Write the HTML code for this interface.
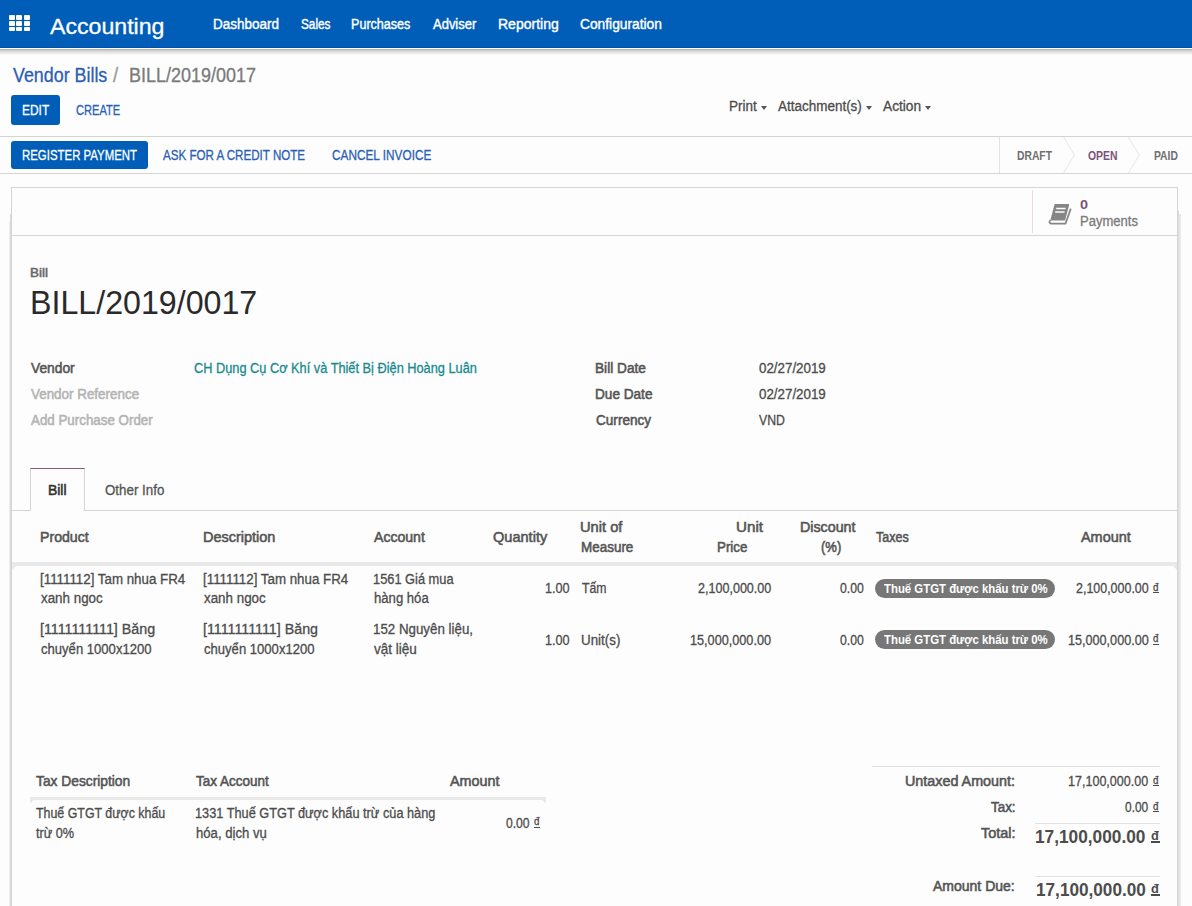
<!DOCTYPE html>
<html><head><meta charset="utf-8">
<style>
*{box-sizing:border-box;}
html,body{margin:0;padding:0;}
body{width:1192px;height:906px;overflow:hidden;position:relative;background:#fdfdfd;font-family:"Liberation Sans",sans-serif;color:#4c4c4c;}
.t{position:absolute;white-space:nowrap;line-height:normal;transform-origin:0 0;}
.n{-webkit-text-stroke:0.3px currentColor;}
.sb{-webkit-text-stroke:0.55px currentColor;}
.r{position:absolute;}
.grid i{position:absolute;width:6px;height:5px;background:#fff;border-radius:1px;}
.caret{position:absolute;width:0;height:0;border-left:3.5px solid transparent;border-right:3.5px solid transparent;border-top:4px solid #555;}
.band{position:absolute;height:3px;background:#e9e9e9;}
.badge{position:absolute;background:#777777;border-radius:10px;}
</style></head><body>
<!-- navbar -->
<div class="r" style="left:0;top:0;width:1192px;height:47px;background:#005eb8;"></div>
<div class="r" style="left:0;top:47px;width:1192px;height:1px;background:#0052aa;"></div>
<div class="r" style="left:0;top:48px;width:1192px;height:1px;background:#ffffff;"></div>
<div class="r" style="left:0;top:49px;width:1192px;height:1px;background:#b6b6b6;"></div>
<div class="r" style="left:0;top:50px;width:1192px;height:1px;background:#cfcfcf;"></div>
<div class="r" style="left:0;top:51px;width:1192px;height:1px;background:#d9d9d9;"></div>
<div class="r" style="left:0;top:52px;width:1192px;height:1px;background:#e4e4e4;"></div>
<div class="r" style="left:0;top:53px;width:1192px;height:1px;background:#ececec;"></div>
<div class="r" style="left:0;top:54px;width:1192px;height:1px;background:#f6f6f6;"></div>
<div class="r grid" style="left:0;top:0;width:40px;height:40px;">
<i style="left:9.1px;top:15px;width:6px;height:4.8px;"></i><i style="left:16.4px;top:15px;width:6px;height:4.8px;"></i><i style="left:23.8px;top:15px;width:6px;height:4.8px;"></i><i style="left:9.1px;top:21px;width:6px;height:4.6px;"></i><i style="left:16.4px;top:21px;width:6px;height:4.6px;"></i><i style="left:23.8px;top:21px;width:6px;height:4.6px;"></i><i style="left:9.1px;top:26.8px;width:6px;height:4.4px;"></i><i style="left:16.4px;top:26.8px;width:6px;height:4.4px;"></i><i style="left:23.8px;top:26.8px;width:6px;height:4.4px;"></i>
</div>
<!-- control panel -->
<div class="r" style="left:11px;top:95px;width:49px;height:30px;background:#005eb8;border-radius:3px;"></div>
<div class="caret" style="left:761px;top:105.5px;"></div>
<div class="caret" style="left:866px;top:105.5px;"></div>
<div class="caret" style="left:925px;top:105.5px;"></div>
<div class="r" style="left:0;top:136px;width:1192px;height:1px;background:#d4d4d4;"></div>
<div class="r" style="left:0;top:173px;width:1192px;height:1px;background:#d4d4d4;"></div>
<div class="r" style="left:11px;top:141px;width:137px;height:28px;background:#005eb8;border-radius:3px;"></div>
<div class="r" style="left:999px;top:137px;width:1px;height:36px;background:#e2e2e2;"></div>
<svg class="r" style="left:1060px;top:137px;" width="90" height="36" viewBox="0 0 90 36">
<path d="M3.6 0 L14.4 18 L3.6 36" fill="none" stroke="#e6e6e6" stroke-width="1"/>
<path d="M68.4 0 L79.3 18 L68.4 36" fill="none" stroke="#e6e6e6" stroke-width="1"/>
</svg>
<!-- sheet -->
<div class="r" style="left:10px;top:214px;width:1px;height:700px;background:#dcdcdc;"></div><div class="r" style="left:9px;top:222px;width:1px;height:700px;background:#ececec;"></div>
<div class="r" style="left:1178px;top:211px;width:1px;height:700px;background:#dedede;"></div><div class="r" style="left:1179px;top:214px;width:2px;height:700px;background:#e8e8e8;"></div>
<div class="r" style="left:11px;top:187px;width:1167px;height:740px;border:1px solid #d4d4d4;background:#fdfdfd;"></div>
<div class="r" style="left:12px;top:235px;width:1165px;height:1px;background:#d4d4d4;"></div>
<div class="r" style="left:1032px;top:190px;width:1px;height:43px;background:#eadcdc;"></div>
<svg class="r" style="left:1040px;top:195px;" width="40" height="35" viewBox="0 0 40 35">
<path d="M14.6 9 L28.2 9 Q29.4 9 29.1 10.2 L25 25.6 L10.3 25.6 Z" fill="#868686"/>
<path d="M10.6 25 Q8 27.5 11 28.6 L25.5 28.6 L30.8 13.6" fill="none" stroke="#868686" stroke-width="1.7" stroke-linejoin="round"/>
<path d="M16.2 13.4 L25.6 13.4 M15.2 17 L24.6 17" stroke="#fdfdfd" stroke-width="1.5"/>
</svg>
<!-- tabs -->
<div class="r" style="left:12px;top:510px;width:1165px;height:1px;background:#d4d4d4;"></div>
<div class="r" style="left:30px;top:468px;width:55px;height:43px;border:1px solid #d4d4d4;border-top:1px solid #875a7b;border-bottom:none;background:#fdfdfd;"></div>
<!-- table bands -->
<div class="band" style="left:12px;top:562px;width:1165px;height:4px;"></div>
<div class="r" style="left:12px;top:566px;width:4px;height:4px;background:linear-gradient(135deg,#e9e9e9 45%,transparent 55%);"></div>
<div class="r" style="left:1173px;top:566px;width:4px;height:4px;background:linear-gradient(225deg,#e9e9e9 45%,transparent 55%);"></div>
<div class="badge" style="left:875px;top:579px;width:180px;height:19px;"></div>
<div class="badge" style="left:875px;top:630px;width:180px;height:19px;"></div>
<div class="band" style="left:30px;top:797px;width:516px;"></div>
<div class="r" style="left:30px;top:800px;width:4px;height:3px;background:linear-gradient(135deg,#e9e9e9 45%,transparent 55%);"></div>
<div class="r" style="left:542px;top:800px;width:4px;height:3px;background:linear-gradient(225deg,#e9e9e9 45%,transparent 55%);"></div>
<!-- totals lines -->
<div class="r" style="left:872px;top:766px;width:288px;height:1px;background:#e2e2e2;"></div>
<div class="r" style="left:1035px;top:823px;width:125px;height:1px;background:#e2e2e2;"></div>
<div class="r" style="left:1035px;top:876px;width:125px;height:1px;background:#e2e2e2;"></div>
<div class="r" style="left:1153.2px;top:592px;width:5.6px;height:1.2px;background:#4c4c4c;"></div>
<div class="r" style="left:1153.2px;top:643.5px;width:5.6px;height:1.2px;background:#4c4c4c;"></div>
<div class="r" style="left:534.2px;top:826.5px;width:5.6px;height:1.2px;background:#4c4c4c;"></div>
<div class="r" style="left:1153.2px;top:784.8px;width:5.6px;height:1.2px;background:#4c4c4c;"></div>
<div class="r" style="left:1153.2px;top:810.8px;width:5.6px;height:1.2px;background:#4c4c4c;"></div>
<div class="r" style="left:1151.0px;top:841px;width:8.5px;height:1.5px;background:#4c4c4c;"></div>
<div class="r" style="left:1151.0px;top:894px;width:8.5px;height:1.5px;background:#4c4c4c;"></div>
<div class="t n" style="left:49.50px;top:13.5px;font-size:22.5px;font-weight:normal;color:#ffffff;transform:scaleX(1.0279);">Accounting</div>
<div class="t sb" style="left:212.64px;top:16px;font-size:14px;font-weight:normal;color:#ffffff;transform:scaleX(0.9625);-webkit-text-stroke:0.4px #fff;">Dashboard</div>
<div class="t sb" style="left:300.50px;top:16px;font-size:14px;font-weight:normal;color:#ffffff;transform:scaleX(0.8424);-webkit-text-stroke:0.4px #fff;">Sales</div>
<div class="t sb" style="left:351.10px;top:16px;font-size:14px;font-weight:normal;color:#ffffff;transform:scaleX(0.8980);-webkit-text-stroke:0.4px #fff;">Purchases</div>
<div class="t sb" style="left:433.10px;top:16px;font-size:14px;font-weight:normal;color:#ffffff;transform:scaleX(0.9273);-webkit-text-stroke:0.4px #fff;">Adviser</div>
<div class="t sb" style="left:498.00px;top:16px;font-size:14px;font-weight:normal;color:#ffffff;-webkit-text-stroke:0.4px #fff;">Reporting</div>
<div class="t sb" style="left:579.90px;top:16px;font-size:14px;font-weight:normal;color:#ffffff;transform:scaleX(0.9832);-webkit-text-stroke:0.4px #fff;">Configuration</div>
<div class="t n" style="left:12.60px;top:64px;font-size:20px;font-weight:normal;color:#2b5fb4;transform:scaleX(0.8929);">Vendor Bills</div>
<div class="t n" style="left:113.40px;top:64px;font-size:20px;font-weight:normal;color:#9a9a9a;transform:scaleX(0.9333);">/</div>
<div class="t n" style="left:128.90px;top:64px;font-size:20px;font-weight:normal;color:#7a7a7a;transform:scaleX(0.8992);">BILL/2019/0017</div>
<div class="t n" style="left:22.05px;top:102px;font-size:14px;font-weight:normal;color:#ffffff;transform:scaleX(0.8520);">EDIT</div>
<div class="t n" style="left:76.00px;top:102px;font-size:14px;font-weight:normal;color:#2b5fb4;transform:scaleX(0.7923);">CREATE</div>
<div class="t n" style="left:728.64px;top:98px;font-size:14px;font-weight:normal;color:#4c4c4c;transform:scaleX(0.9643);">Print</div>
<div class="t n" style="left:778.00px;top:98px;font-size:14px;font-weight:normal;color:#4c4c4c;transform:scaleX(0.9621);">Attachment(s)</div>
<div class="t n" style="left:883.30px;top:98px;font-size:14px;font-weight:normal;color:#4c4c4c;transform:scaleX(0.9784);">Action</div>
<div class="t n" style="left:22.08px;top:147px;font-size:14px;font-weight:normal;color:#ffffff;transform:scaleX(0.8157);">REGISTER PAYMENT</div>
<div class="t n" style="left:163.00px;top:147px;font-size:14px;font-weight:normal;color:#2b5fb4;transform:scaleX(0.8277);">ASK FOR A CREDIT NOTE</div>
<div class="t n" style="left:332.10px;top:147px;font-size:14px;font-weight:normal;color:#2b5fb4;transform:scaleX(0.8439);">CANCEL INVOICE</div>
<div class="t" style="left:1016.90px;top:149px;font-size:12px;font-weight:bold;color:#6f6f6f;transform:scaleX(0.8590);">DRAFT</div>
<div class="t" style="left:1088.10px;top:149px;font-size:12px;font-weight:bold;color:#7e5478;transform:scaleX(0.8698);">OPEN</div>
<div class="t" style="left:1153.80px;top:149px;font-size:12px;font-weight:bold;color:#6f6f6f;transform:scaleX(0.8608);">PAID</div>
<div class="t" style="left:1080.20px;top:197px;font-size:13px;font-weight:bold;color:#7e5478;transform:scaleX(1.1143);">0</div>
<div class="t n" style="left:1080.07px;top:213px;font-size:14px;font-weight:normal;color:#7a7a7a;transform:scaleX(0.9306);">Payments</div>
<div class="t sb" style="left:29.87px;top:265px;font-size:13px;font-weight:normal;color:#666666;transform:scaleX(1.0336);">Bill</div>
<div class="t n" style="left:30.05px;top:284px;font-size:33px;font-weight:normal;color:#2a2a2a;transform:scaleX(0.9752);-webkit-text-stroke:0;">BILL/2019/0017</div>
<div class="t sb" style="left:30.50px;top:360px;font-size:14px;font-weight:normal;color:#555555;transform:scaleX(0.9841);">Vendor</div>
<div class="t sb" style="left:30.50px;top:386px;font-size:14px;font-weight:normal;color:#b4b4b4;transform:scaleX(0.9578);">Vendor Reference</div>
<div class="t sb" style="left:30.50px;top:412px;font-size:14px;font-weight:normal;color:#b4b4b4;transform:scaleX(0.9534);">Add Purchase Order</div>
<div class="t n" style="left:193.80px;top:360px;font-size:14px;font-weight:normal;color:#1a8a8f;transform:scaleX(0.9123);">CH Dụng Cụ Cơ Khí và Thiết Bị Điện Hoàng Luân</div>
<div class="t sb" style="left:594.52px;top:360px;font-size:14px;font-weight:normal;color:#555555;transform:scaleX(0.9758);">Bill Date</div>
<div class="t sb" style="left:594.53px;top:386px;font-size:14px;font-weight:normal;color:#555555;transform:scaleX(0.9716);">Due Date</div>
<div class="t sb" style="left:595.50px;top:412px;font-size:14px;font-weight:normal;color:#555555;transform:scaleX(0.9702);">Currency</div>
<div class="t n" style="left:759.00px;top:360px;font-size:14px;font-weight:normal;color:#4c4c4c;transform:scaleX(0.9533);">02/27/2019</div>
<div class="t n" style="left:759.00px;top:386px;font-size:14px;font-weight:normal;color:#4c4c4c;transform:scaleX(0.9533);">02/27/2019</div>
<div class="t n" style="left:759.00px;top:412px;font-size:14px;font-weight:normal;color:#4c4c4c;transform:scaleX(0.8761);">VND</div>
<div class="t sb" style="left:47.71px;top:482px;font-size:14px;font-weight:normal;color:#333333;transform:scaleX(0.9910);">Bill</div>
<div class="t n" style="left:104.80px;top:482px;font-size:14px;font-weight:normal;color:#555555;transform:scaleX(0.9525);">Other Info</div>
<div class="t sb" style="left:40.49px;top:529px;font-size:14px;font-weight:normal;color:#555555;transform:scaleX(1.0093);">Product</div>
<div class="t sb" style="left:202.77px;top:529px;font-size:14px;font-weight:normal;color:#555555;transform:scaleX(1.0331);">Description</div>
<div class="t sb" style="left:373.80px;top:529px;font-size:14px;font-weight:normal;color:#555555;transform:scaleX(1.0040);">Account</div>
<div class="t sb" style="left:492.60px;top:529px;font-size:14px;font-weight:normal;color:#555555;transform:scaleX(1.0396);">Quantity</div>
<div class="t sb" style="left:580.45px;top:519px;font-size:14px;font-weight:normal;color:#555555;transform:scaleX(1.0487);">Unit of</div>
<div class="t sb" style="left:580.54px;top:539px;font-size:14px;font-weight:normal;color:#555555;transform:scaleX(0.9612);">Measure</div>
<div class="t sb" style="left:735.92px;top:519px;font-size:14px;font-weight:normal;color:#555555;transform:scaleX(1.0830);">Unit</div>
<div class="t sb" style="left:717.25px;top:539px;font-size:14px;font-weight:normal;color:#555555;transform:scaleX(0.9547);">Price</div>
<div class="t sb" style="left:800.48px;top:519px;font-size:14px;font-weight:normal;color:#555555;transform:scaleX(1.0191);">Discount</div>
<div class="t sb" style="left:820.90px;top:539px;font-size:14px;font-weight:normal;color:#555555;transform:scaleX(0.9285);">(%)</div>
<div class="t sb" style="left:875.80px;top:529px;font-size:14px;font-weight:normal;color:#555555;transform:scaleX(0.8941);">Taxes</div>
<div class="t sb" style="left:1080.90px;top:529px;font-size:14px;font-weight:normal;color:#555555;transform:scaleX(1.0298);">Amount</div>
<div class="t n" style="left:40.35px;top:570.5px;font-size:14px;font-weight:normal;color:#4c4c4c;transform:scaleX(0.9519);">[1111112] Tam nhua FR4</div>
<div class="t n" style="left:41.30px;top:590px;font-size:14px;font-weight:normal;color:#4c4c4c;transform:scaleX(0.9550);">xanh ngoc</div>
<div class="t n" style="left:202.75px;top:570.5px;font-size:14px;font-weight:normal;color:#4c4c4c;transform:scaleX(0.9519);">[1111112] Tam nhua FR4</div>
<div class="t n" style="left:203.70px;top:590px;font-size:14px;font-weight:normal;color:#4c4c4c;transform:scaleX(0.9550);">xanh ngoc</div>
<div class="t n" style="left:372.88px;top:570.5px;font-size:14px;font-weight:normal;color:#4c4c4c;transform:scaleX(0.9156);">1561 Giá mua</div>
<div class="t n" style="left:373.80px;top:590px;font-size:14px;font-weight:normal;color:#4c4c4c;transform:scaleX(0.9368);">hàng hóa</div>
<div class="t n" style="left:544.90px;top:580px;font-size:14px;font-weight:normal;color:#4c4c4c;transform:scaleX(0.9032);">1.00</div>
<div class="t n" style="left:581.50px;top:580px;font-size:14px;font-weight:normal;color:#4c4c4c;transform:scaleX(0.8742);">Tấm</div>
<div class="t n" style="left:697.80px;top:580px;font-size:14px;font-weight:normal;color:#4c4c4c;transform:scaleX(0.8968);">2,100,000.00</div>
<div class="t n" style="left:840.00px;top:580px;font-size:14px;font-weight:normal;color:#4c4c4c;transform:scaleX(0.8739);">0.00</div>
<div class="t" style="left:883.80px;top:582px;font-size:12.5px;font-weight:bold;color:#ffffff;transform:scaleX(0.9106);">Thuế GTGT được khấu trừ 0%</div>
<div class="t n" style="left:1075.90px;top:580px;font-size:14px;font-weight:normal;color:#4c4c4c;transform:scaleX(0.8895);">2,100,000.00</div>
<div class="t n" style="left:1153.20px;top:580.5px;font-size:10.5px;font-weight:normal;color:#4c4c4c;transform:scaleX(0.9333);">đ</div>
<div class="t n" style="left:40.28px;top:621px;font-size:14px;font-weight:normal;color:#4c4c4c;transform:scaleX(1.0199);">[1111111111] Băng</div>
<div class="t n" style="left:41.30px;top:641px;font-size:14px;font-weight:normal;color:#4c4c4c;transform:scaleX(0.9339);">chuyển 1000x1200</div>
<div class="t n" style="left:202.68px;top:621px;font-size:14px;font-weight:normal;color:#4c4c4c;transform:scaleX(1.0190);">[1111111111] Băng</div>
<div class="t n" style="left:203.70px;top:641px;font-size:14px;font-weight:normal;color:#4c4c4c;transform:scaleX(0.9339);">chuyển 1000x1200</div>
<div class="t n" style="left:372.85px;top:621px;font-size:14px;font-weight:normal;color:#4c4c4c;transform:scaleX(0.9517);">152 Nguyên liệu,</div>
<div class="t n" style="left:373.80px;top:641px;font-size:14px;font-weight:normal;color:#4c4c4c;transform:scaleX(0.9662);">vật liệu</div>
<div class="t n" style="left:544.90px;top:631.5px;font-size:14px;font-weight:normal;color:#4c4c4c;transform:scaleX(0.9032);">1.00</div>
<div class="t n" style="left:580.54px;top:631.5px;font-size:14px;font-weight:normal;color:#4c4c4c;transform:scaleX(0.9555);">Unit(s)</div>
<div class="t n" style="left:690.10px;top:631.5px;font-size:14px;font-weight:normal;color:#4c4c4c;transform:scaleX(0.9048);">15,000,000.00</div>
<div class="t n" style="left:840.00px;top:631.5px;font-size:14px;font-weight:normal;color:#4c4c4c;transform:scaleX(0.8739);">0.00</div>
<div class="t" style="left:883.80px;top:633px;font-size:12.5px;font-weight:bold;color:#ffffff;transform:scaleX(0.9106);">Thuế GTGT được khấu trừ 0%</div>
<div class="t n" style="left:1067.90px;top:631.5px;font-size:14px;font-weight:normal;color:#4c4c4c;transform:scaleX(0.9015);">15,000,000.00</div>
<div class="t n" style="left:1153.20px;top:632px;font-size:10.5px;font-weight:normal;color:#4c4c4c;transform:scaleX(0.9333);">đ</div>
<div class="t sb" style="left:36.30px;top:772.5px;font-size:14px;font-weight:normal;color:#555555;transform:scaleX(0.9840);">Tax Description</div>
<div class="t sb" style="left:196.20px;top:772.5px;font-size:14px;font-weight:normal;color:#555555;transform:scaleX(0.9624);">Tax Account</div>
<div class="t sb" style="left:449.80px;top:772.5px;font-size:14px;font-weight:normal;color:#555555;transform:scaleX(1.0257);">Amount</div>
<div class="t n" style="left:36.30px;top:805px;font-size:14px;font-weight:normal;color:#4c4c4c;transform:scaleX(0.8853);">Thuế GTGT được khấu</div>
<div class="t n" style="left:36.30px;top:825px;font-size:14px;font-weight:normal;color:#4c4c4c;transform:scaleX(0.9063);">trừ 0%</div>
<div class="t n" style="left:195.09px;top:805px;font-size:14px;font-weight:normal;color:#4c4c4c;transform:scaleX(0.9105);">1331 Thuế GTGT được khấu trừ của hàng</div>
<div class="t n" style="left:196.00px;top:825px;font-size:14px;font-weight:normal;color:#4c4c4c;transform:scaleX(0.9370);">hóa, dịch vụ</div>
<div class="t n" style="left:505.60px;top:814.5px;font-size:14px;font-weight:normal;color:#4c4c4c;transform:scaleX(0.8667);">0.00</div>
<div class="t n" style="left:534.20px;top:815px;font-size:10.5px;font-weight:normal;color:#4c4c4c;transform:scaleX(0.9333);">đ</div>
<div class="t sb" style="left:904.58px;top:772.5px;font-size:14px;font-weight:normal;color:#555555;transform:scaleX(1.0237);">Untaxed Amount:</div>
<div class="t n" style="left:1068.00px;top:772.5px;font-size:14px;font-weight:normal;color:#4c4c4c;transform:scaleX(0.8958);">17,100,000.00</div>
<div class="t n" style="left:1153.20px;top:773.5px;font-size:10.5px;font-weight:normal;color:#4c4c4c;transform:scaleX(0.9333);">đ</div>
<div class="t sb" style="left:990.70px;top:798.5px;font-size:14px;font-weight:normal;color:#555555;transform:scaleX(0.9562);">Tax:</div>
<div class="t n" style="left:1125.00px;top:798.5px;font-size:14px;font-weight:normal;color:#4c4c4c;transform:scaleX(0.8521);">0.00</div>
<div class="t n" style="left:1153.20px;top:799.5px;font-size:10.5px;font-weight:normal;color:#4c4c4c;transform:scaleX(0.9333);">đ</div>
<div class="t sb" style="left:980.80px;top:824.5px;font-size:14px;font-weight:normal;color:#555555;transform:scaleX(1.0316);">Total:</div>
<div class="t" style="left:1035.44px;top:827px;font-size:18px;font-weight:bold;color:#4c4c4c;transform:scaleX(0.9588);">17,100,000.00</div>
<div class="t" style="left:1151.00px;top:828.5px;font-size:12px;font-weight:bold;color:#4c4c4c;transform:scaleX(1.0625);">đ</div>
<div class="t sb" style="left:933.00px;top:877.5px;font-size:14px;font-weight:normal;color:#555555;">Amount Due:</div>
<div class="t" style="left:1035.95px;top:880px;font-size:18px;font-weight:bold;color:#4c4c4c;transform:scaleX(0.9544);">17,100,000.00</div>
<div class="t" style="left:1151.00px;top:881.5px;font-size:12px;font-weight:bold;color:#4c4c4c;transform:scaleX(1.0625);">đ</div>
</body></html>
